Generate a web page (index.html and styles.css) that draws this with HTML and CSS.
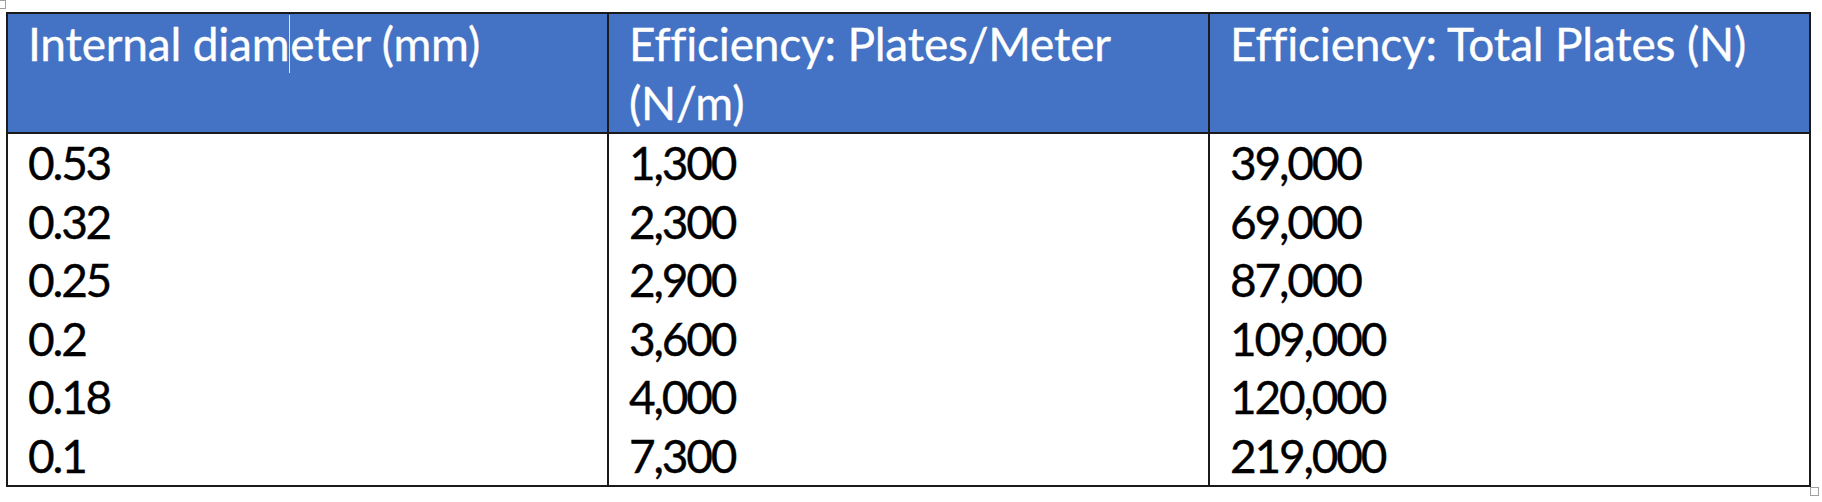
FILE: index.html
```html
<!DOCTYPE html>
<html>
<head>
<meta charset="utf-8">
<link rel="stylesheet" href="styles.css">
</head>
<body>
<div class="page">
  <span class="handle handle-tl"></span>
  <table class="data">
    <colgroup>
      <col class="c1"><col class="c2"><col class="c3">
    </colgroup>
    <thead>
      <tr>
        <th>Internal diam<span class="caret"></span>eter (mm)</th>
        <th>Efficiency: Plates/Meter (N/m)</th>
        <th>Efficiency: Total Plates (N)</th>
      </tr>
    </thead>
    <tbody>
      <tr><td>0.53</td><td>1,300</td><td>39,000</td></tr>
      <tr><td>0.32</td><td>2,300</td><td>69,000</td></tr>
      <tr><td>0.25</td><td>2,900</td><td>87,000</td></tr>
      <tr><td>0.2</td><td>3,600</td><td>109,000</td></tr>
      <tr><td>0.18</td><td>4,000</td><td>120,000</td></tr>
      <tr><td>0.1</td><td>7,300</td><td>219,000</td></tr>
    </tbody>
  </table>
  <span class="handle handle-br"></span>
</div>
</body>
</html>
```
FILE: styles.css
```css
html, body {
  margin: 0;
  padding: 0;
  background: #ffffff;
}
.page {
  position: relative;
  width: 1822px;
  height: 502px;
  padding: 12px 0 0 6px;
  box-sizing: border-box;
}
.data {
  border-collapse: collapse;
  width: 1803px;
  table-layout: fixed;
  font-family: "Lato", "Open Sans", sans-serif;
  font-size: 46px;
  line-height: 58.5px;
  color: #000;
  font-variant-ligatures: none;
  -webkit-text-stroke: 0.35px currentColor;
}
.c1 { width: 601px; }
.c2 { width: 601px; }
.c3 { width: 601px; }
.data th, .data td {
  border: 2px solid #1a1a1a;
  padding: 0 20px;
  text-align: left;
  vertical-align: top;
}
.data th {
  background: #4472c4;
  color: #ffffff;
  font-weight: normal;
  height: 117px;
  padding-top: 1px;
  letter-spacing: -0.2px;
}
.data tbody td {
  border-top: none;
  border-bottom: none;
  height: 58.5px;
  letter-spacing: -2.2px;
}
.data tbody tr:first-child td { border-top: 2px solid #1a1a1a; }
.data tbody tr:last-child td { border-bottom: 2px solid #1a1a1a; }
.caret {
  display: inline-block;
  width: 0;
  height: 58px;
  border-left: 1.5px solid #d6e4ff;
  vertical-align: -12px;
}
.handle {
  position: absolute;
  width: 9px;
  height: 9px;
  border: 1px solid #a0a0a0;
  background: #fff;
  box-sizing: border-box;
}
.handle-tl { left: -3px; top: 0; }
.handle-br { left: 1810px; top: 487px; }
```
